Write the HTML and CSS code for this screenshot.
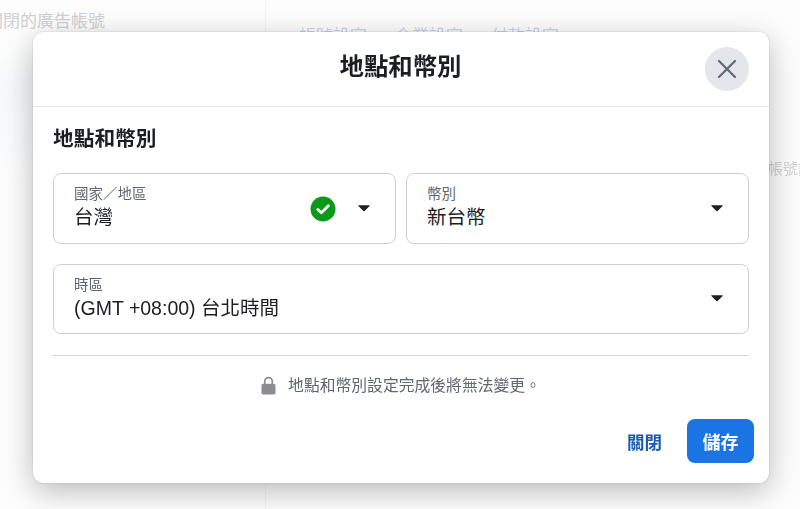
FILE: index.html
```html
<!DOCTYPE html>
<html lang="zh-Hant">
<head>
<meta charset="utf-8">
<title>地點和幣別</title>
<link rel="stylesheet" href="styles.css">
</head>
<body>
<div class="page">
  <aside class="side"><span class="side-text">關閉的廣告帳號</span></aside>
  <main class="content">
    <div class="tabs"><span>帳號設定</span><span>企業設定</span><span>付款設定</span></div>
    <div class="content-text">廣告帳號設定</div>
  </main>
</div>
<div class="overlay">
  <section class="modal">
    <header class="modal-head">
      <h1>地點和幣別</h1>
      <button class="close" type="button" aria-label="關閉">
        <svg width="20" height="20" viewBox="0 0 20 20"><path d="M2 2 18 18M18 2 2 18" stroke="#606770" stroke-width="2.2" stroke-linecap="round" fill="none"/></svg>
      </button>
    </header>
    <div class="modal-body">
      <h2>地點和幣別</h2>
      <div class="row">
        <div class="field tall">
          <div class="field-text"><span class="label">國家／地區</span><span class="value">台灣</span></div>
          <svg class="check" width="26" height="26" viewBox="0 0 26 26"><circle cx="13" cy="13" r="12.5" fill="#0a9a17"/><path d="M7.8 13.4 11.4 16.8 18.4 9.8" stroke="#fff" stroke-width="2.8" stroke-linecap="round" stroke-linejoin="round" fill="none"/></svg>
          <svg class="caret" width="12" height="8" viewBox="0 0 14 9"><path d="M1 1.2h12c.6 0 .9.6.5 1L8 7.8c-.5.5-1.400.5-2 0L.5 2.200c-.4-.4-.1-1 .5-1z" fill="#1c1e21"/></svg>
        </div>
        <div class="field tall">
          <div class="field-text"><span class="label">幣別</span><span class="value">新台幣</span></div>
          <svg class="caret" width="12" height="8" viewBox="0 0 14 9"><path d="M1 1.2h12c.6 0 .9.6.5 1L8 7.8c-.5.5-1.400.5-2 0L.5 2.200c-.4-.4-.1-1 .5-1z" fill="#1c1e21"/></svg>
        </div>
      </div>
      <div class="field">
        <div class="field-text"><span class="label">時區</span><span class="value">(GMT +08:00) 台北時間</span></div>
        <svg class="caret" width="12" height="8" viewBox="0 0 14 9"><path d="M1 1.2h12c.6 0 .9.6.5 1L8 7.8c-.5.5-1.400.5-2 0L.5 2.200c-.4-.4-.1-1 .5-1z" fill="#1c1e21"/></svg>
      </div>
      <div class="notice">
        <svg width="15" height="19" viewBox="0 0 16 20"><path d="M4 9V5.500a4 4 0 0 1 8 0V9" stroke="#8a8d91" stroke-width="1.800" fill="none"/><rect x="0.500" y="8" width="15" height="11.500" rx="2" fill="#8a8d91"/></svg>
        <span>地點和幣別設定完成後將無法變更。</span>
      </div>
      <div class="actions">
        <button class="link" type="button">關閉</button>
        <button class="primary" type="button">儲存</button>
      </div>
    </div>
  </section>
</div>
</body>
</html>
```
FILE: styles.css
```css
* { box-sizing: border-box; }
html, body { margin: 0; height: 100%; }
body {
  width: 800px;
  height: 509px;
  overflow: hidden;
  position: relative;
  background: #fdfdfd;
  font-family: "Liberation Sans", "Noto Sans CJK TC", sans-serif;
  color: #1c1e21;
}
.page { display: flex; height: 100%; filter: blur(0.7px); }
.side {
  flex: none;
  width: 266px;
  padding-top: 12px;
  border-right: 1px solid #f5f5f5;
  background: linear-gradient(#fdfdfd 50px, #f6f8fc 90px, #fdfdfd 180px);
  overflow: hidden;
}
.side-text { display: block; margin-left: -14px; font-size: 17px; line-height: 20px; color: #cfd0d2; white-space: nowrap; }
.content { flex: 1; min-width: 0; padding-top: 27px; padding-left: 33px; overflow: hidden; }
.tabs { display: flex; gap: 28px; font-size: 17px; line-height: 20px; color: #c9d6ea; }
.content-text {
  margin: 112px 0 0 439px;
  font-size: 15px;
  line-height: 20px;
  color: #cfd0d2;
  white-space: nowrap;
}
.overlay { position: absolute; inset: 0; padding: 32px 0 0 33px; }
.modal {
  width: 736px;
  height: 451px;
  background: #fff;
  border-radius: 10px;
  box-shadow: 0 8px 30px rgba(0, 0, 0, .27), 0 0 2px rgba(0, 0, 0, .2);
}
.modal-head {
  height: 75px;
  border-bottom: 1px solid #e4e5e7;
  display: flex;
  align-items: center;
  justify-content: center;
  position: relative;
}
.modal-head h1 { margin: -4px 0 0 -1px; font-size: 24.4px; line-height: 30px; font-weight: 700; color: #1c1e21; }
.close {
  position: absolute;
  right: 20px;
  top: 15px;
  width: 44px;
  height: 44px;
  padding: 0;
  border: 0;
  border-radius: 50%;
  background: #e4e6eb;
  display: flex;
  align-items: center;
  justify-content: center;
}
.modal-body { padding: 19px 20px 0; }
.modal-body h2 { margin: 0 0 21px; font-size: 20.7px; line-height: 26px; font-weight: 700; color: #1c1e21; }
.row { display: flex; gap: 10px; margin-bottom: 20px; }
.field {
  flex: 1;
  height: 70px;
  padding: 0 25px 0 20px;
  border: 1px solid #ccd0d5;
  border-radius: 8px;
  display: flex;
  align-items: center;
  background: #fff;
}
.field.tall { height: 71px; }
.field-text { flex: 1; display: flex; flex-direction: column; }
.label { font-size: 14.5px; line-height: 17px; color: #606770; }
.value { font-size: 19.5px; line-height: 28px; color: #1c1e21; }
.check { margin-right: 22px; }
.caret { margin-top: -2px; }
.notice {
  margin-top: 21px;
  border-top: 1px solid #d4d6d9;
  display: flex;
  justify-content: center;
  align-items: center;
  gap: 12px;
  height: 60px;
  font-size: 15.8px;
  line-height: 20px;
  color: #606770;
}
.actions { display: flex; justify-content: flex-end; align-items: center; gap: 25px; margin: 4px -5px 0 0; }
.link { padding: 0; border: 0; background: none; font: inherit; font-size: 17.500px; font-weight: 700; color: #1b5bb5; }
.primary {
  width: 67px;
  height: 44px;
  padding: 0;
  border: 0;
  border-radius: 8px;
  background: #1b74e4;
  color: #fff;
  font: inherit;
  font-size: 18px;
  font-weight: 700;
}
```
